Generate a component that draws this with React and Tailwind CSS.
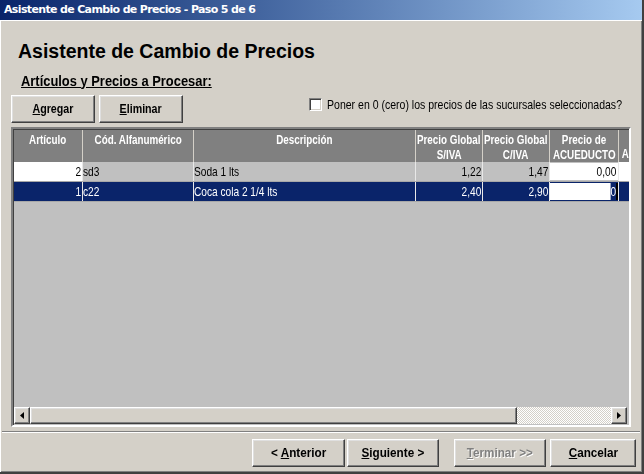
import React from 'react';

const arial = { fontFamily: '"Liberation Sans", Arial, sans-serif' };

const raised =
  'bg-[#d4d0c8] border border-t-white border-l-white border-r-[#404040] border-b-[#404040] shadow-[inset_-1px_-1px_0_#808080,inset_1px_1px_0_#dfdfdf]';

// Arial Narrow is not installed: squeeze Liberation Sans sideways instead
const N = ({ children, className = '' }) => (
  <span className={`inline-block whitespace-nowrap ${className}`} style={arial}>
    {children}
  </span>
);

const WinButton = ({ children, className = '', disabled = false }) => (
  <button
    className={`${raised} shrink-0 flex items-center justify-center text-[13px] font-bold ${disabled ? 'text-[#808080] [text-shadow:1px_1px_0_#ffffff]' : 'text-black'} ${className}`}
    style={arial}
  >
    {children}
  </button>
);

const columns = [
  { key: 'art', label: ['Artículo'], w: 'w-[68px]' },
  { key: 'cod', label: ['Cód. Alfanumérico'], w: 'w-[111px]' },
  { key: 'desc', label: ['Descripción'], w: 'w-[222px]' },
  { key: 'siva', label: ['Precio Global', 'S/IVA'], w: 'w-[67px]' },
  { key: 'civa', label: ['Precio Global', 'C/IVA'], w: 'w-[67px]' },
  { key: 'acu', label: ['Precio de', 'ACUEDUCTO'], w: 'w-[69px]' },
  { key: 'more', label: ['', 'A'], w: 'w-[14px]' },
];

const rows = [
  { art: '2', cod: 'sd3', desc: 'Soda 1 lts', siva: '1,22', civa: '1,47', acu: '0,00', selected: false },
  { art: '1', cod: 'c22', desc: 'Coca cola 2 1/4 lts', siva: '2,40', civa: '2,90', acu: '0', selected: true },
];

const cellText = 'scale-x-[0.78]';

const App = () => {
  return (
    <div className="w-[644px] h-[474px] bg-[#d4d0c8] flex flex-col border-r-2 border-b-2 border-r-[#404040] border-b-[#404040] shadow-[inset_1px_1px_0_#ffffff,inset_-1px_-1px_0_#808080] overflow-hidden">
      {/* Title bar */}
      <div className="h-[20px] bg-linear-to-r from-[#0a246a] to-[#a6caf0] flex items-center pl-[4px] shrink-0">
        <span className="text-white text-[11px] font-bold tracking-[-0.65px]" style={{ fontFamily: '"DejaVu Sans", sans-serif' }}>
          Asistente de Cambio de Precios - Paso 5 de 6
        </span>
      </div>
      <div className="h-px bg-white shrink-0" />

      {/* Heading */}
      <div className="pl-[18px] pt-[21px] leading-none shrink-0">
        <h1 className="text-[19.5px] font-bold text-black" style={arial}>
          Asistente de Cambio de Precios
        </h1>
      </div>
      <div className="pl-[21px] pt-[10px] leading-none h-[24px] shrink-0">
        <N className="text-[15px] font-bold underline text-black scale-x-[0.86] origin-left">
          Artículos y Precios a Procesar:
        </N>
      </div>

      {/* Toolbar */}
      <div className="flex items-center pl-[11px] pt-[9px] shrink-0">
        <WinButton className="w-[84px] h-[28px]">
          <N className="scale-x-[0.82] origin-center"><u>A</u>gregar</N>
        </WinButton>
        <WinButton className="w-[84px] h-[28px] ml-[4px]">
          <N className="scale-x-[0.82] origin-center"><u>E</u>liminar</N>
        </WinButton>
        <div className="ml-[126px] flex items-center gap-[5px] pb-[8px] shrink-0">
          <div className="w-[13px] h-[13px] shrink-0 bg-white border border-t-[#808080] border-l-[#808080] border-r-white border-b-white shadow-[inset_1px_1px_0_#404040,inset_-1px_-1px_0_#d4d0c8]" />
          <N className="text-[13px] text-black scale-x-[0.81] origin-left">
            Poner en 0 (cero) los precios de las sucursales seleccionadas?
          </N>
        </div>
      </div>

      {/* Grid */}
      <div className="mx-[11px] mt-[4px] h-[300px] shrink-0 flex flex-col border-2 border-t-[#808080] border-l-[#808080] border-r-white border-b-white shadow-[inset_1px_1px_0_#404040] bg-[#c0c0c0] overflow-hidden pt-px pl-px">
        {/* Header */}
        <div className="flex h-[32px] bg-[#808080] shrink-0">
          {columns.map((c) => (
            <div
              key={c.key}
              className={`${c.w} shrink-0 border-l border-l-[#d4d0c8] first:border-l-0 flex flex-col items-center pt-[3px] text-white text-[12px] font-bold leading-[15px] overflow-hidden`}
            >
              {c.label.map((l, i) => (
                <N key={i} className="h-[15px] scale-x-[0.82] origin-center">{l}</N>
              ))}
            </div>
          ))}
        </div>

        {/* Rows */}
        {rows.map((r, i) => {
          const bg = r.selected ? 'bg-[#0a246a] text-white' : 'bg-[#c0c0c0] text-black';
          return (
            <div key={i} className={`flex h-[20px] shrink-0 text-[13px] leading-[19px] border-b border-b-[#a8a8a8] ${bg}`}>
              <div className={`w-[68px] shrink-0 text-right pr-[1px] overflow-hidden ${r.selected ? '' : 'bg-white text-black'}`}>
                <N className={`${cellText} origin-right`}>{r.art}</N>
              </div>
              <div className="w-[111px] shrink-0 border-l border-l-[#e8e8e8] overflow-hidden">
                <N className={`${cellText} origin-left`}>{r.cod}</N>
              </div>
              <div className="w-[222px] shrink-0 border-l border-l-[#e8e8e8] overflow-hidden">
                <N className={`${cellText} origin-left`}>{r.desc}</N>
              </div>
              <div className="w-[67px] shrink-0 border-l border-l-[#e8e8e8] text-right pr-[1px] overflow-hidden">
                <N className={`${cellText} origin-right`}>{r.siva}</N>
              </div>
              <div className="w-[67px] shrink-0 border-l border-l-[#e8e8e8] text-right pr-[1px] overflow-hidden">
                <N className={`${cellText} origin-right`}>{r.civa}</N>
              </div>
              <div className="w-[69px] shrink-0 border-l border-l-[#e8e8e8] py-px">
                <div className={`h-full bg-white text-black text-right overflow-hidden leading-[17px] ${r.selected ? 'border-r-2 border-r-black' : 'pr-[2px]'}`}>
                  {r.selected ? (
                    <N className={`${cellText} origin-right bg-[#0a246a] text-white`}>{r.acu}</N>
                  ) : (
                    <N className={`${cellText} origin-right`}>{r.acu}</N>
                  )}
                </div>
              </div>
              <div className={`w-[14px] shrink-0 border-l border-l-[#e8e8e8] ${r.selected ? '' : 'bg-white'}`} />
            </div>
          );
        })}

        <div className="flex-1" />

        {/* Horizontal scrollbar */}
        <div className="flex h-[17px] shrink-0 mb-[1px] mr-[2px]">
          <div className={`${raised} w-[16px] h-[17px] flex items-center justify-center`}>
            <svg width="4" height="7" viewBox="0 0 4 7"><path d="M4 0 L0 3.5 L4 7 Z" fill="black" /></svg>
          </div>
          <div className={`${raised} w-[487px] h-[17px]`} />
          <div className="flex-1 h-[17px] bg-[repeating-conic-gradient(#ffffff_0%_25%,#d4d0c8_0%_50%)] bg-[length:2px_2px]" />
          <div className={`${raised} w-[16px] h-[17px] flex items-center justify-center`}>
            <svg width="4" height="7" viewBox="0 0 4 7"><path d="M0 0 L4 3.5 L0 7 Z" fill="black" /></svg>
          </div>
        </div>
      </div>

      {/* Separator */}
      <div className="mt-[4px] mx-[2px] h-px bg-[#808080] shrink-0" />
      <div className="mx-[2px] h-px bg-white shrink-0" />

      {/* Bottom buttons */}
      <div className="flex justify-end items-center pr-[6px] pt-[6px] shrink-0">
        <WinButton className="w-[93px] h-[28px]">
          <N className="scale-x-[0.9] origin-center">&lt; <u>A</u>nterior</N>
        </WinButton>
        <WinButton className="w-[92px] h-[28px] ml-[2px]">
          <N className="scale-x-[0.9] origin-center"><u>S</u>iguiente &gt;</N>
        </WinButton>
        <WinButton disabled className="w-[92px] h-[28px] ml-[15px]">
          <N className="scale-x-[0.9] origin-center"><u>T</u>erminar &gt;&gt;</N>
        </WinButton>
        <WinButton className="w-[86px] h-[28px] ml-[4px]">
          <N className="scale-x-[0.9] origin-center"><u>C</u>ancelar</N>
        </WinButton>
      </div>
    </div>
  );
};

export default App;
